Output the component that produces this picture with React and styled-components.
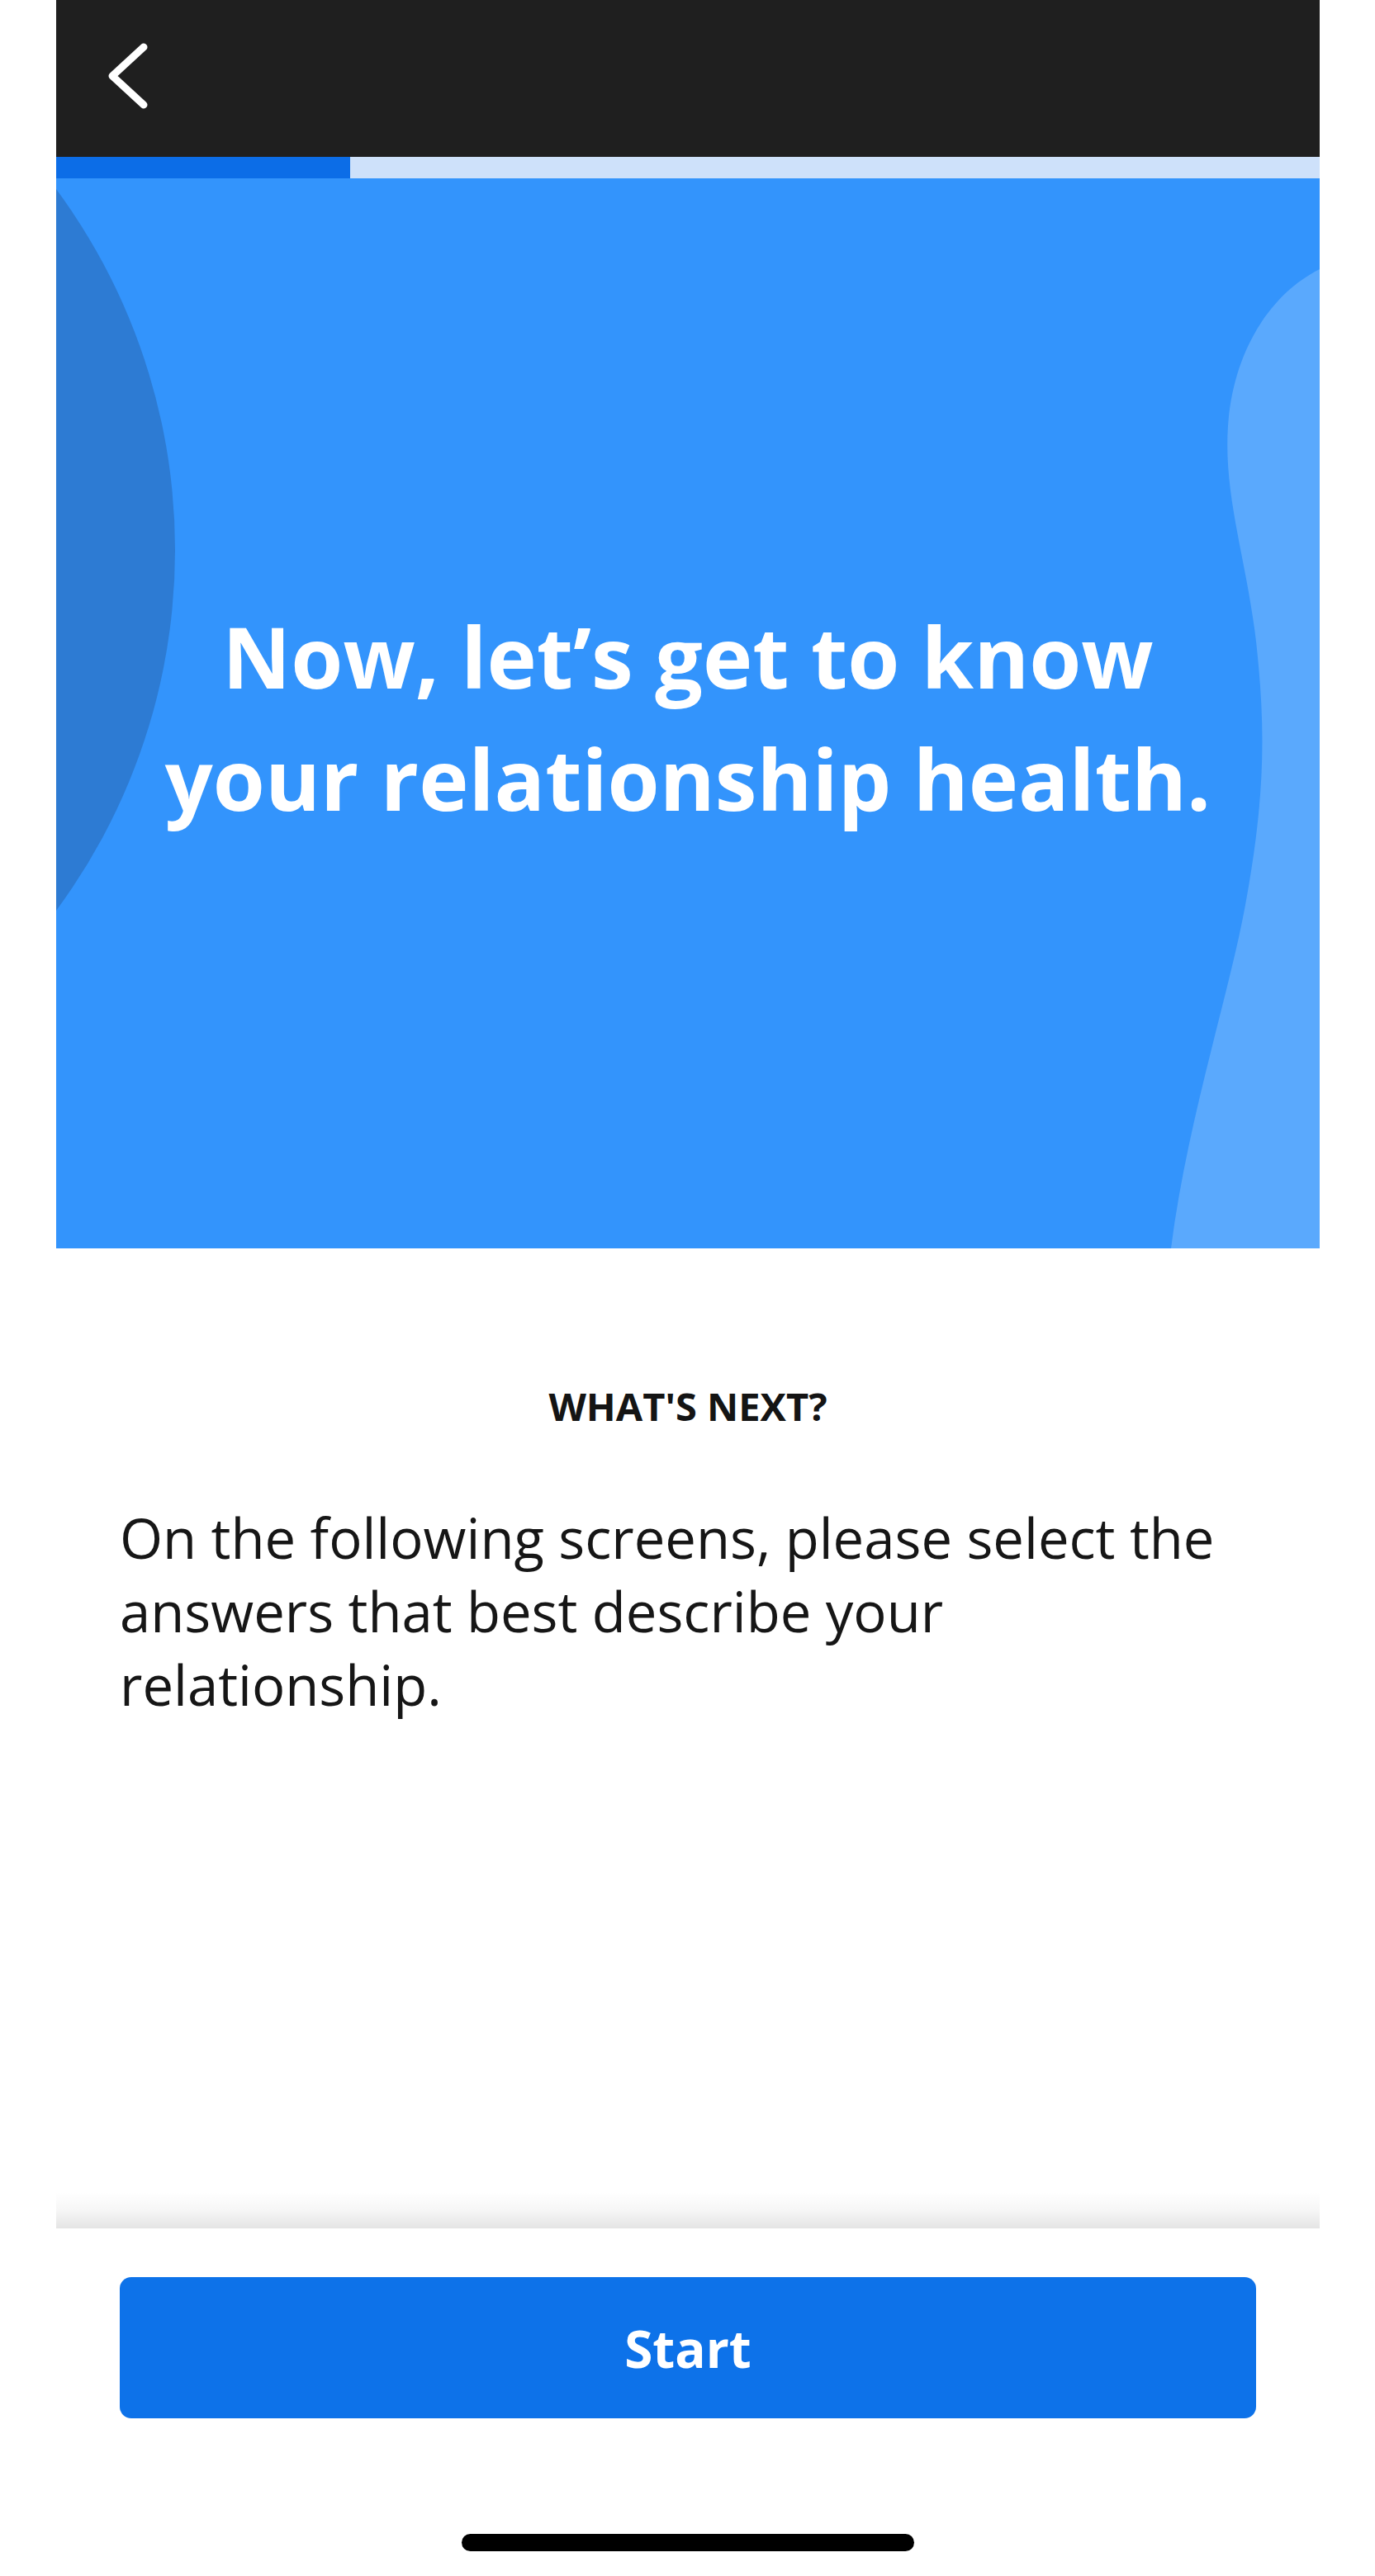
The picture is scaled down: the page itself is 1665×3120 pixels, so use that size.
import styled, { createGlobalStyle } from "styled-components";

// ▼ global
const GlobalStyle = createGlobalStyle`
    html, body {
        margin: 0;
        padding: 0;
        background: #ffffff;
    }
    * {
        box-sizing: border-box;
    }
`;

// ▼ layout
const Page = styled.div`
    width: 1665px;
    min-height: 3120px;
    padding: 0 67px 0 68px;
    display: flex;
    flex-direction: column;
    font-family: "Open Sans", "Noto Sans", sans-serif;
    background: #ffffff;
`;

const TopBar = styled.header`
    height: 190px;
    background: #1f1f1f;
    display: flex;
    align-items: center;
    padding: 0 0 6px 62px;
`;

const BackButton = styled.button`
    background: none;
    border: none;
    padding: 0;
    display: flex;
    cursor: pointer;
`;

const Track = styled.div`
    height: 26px;
    background: #cee1fa;
    display: flex;
`;

const Fill = styled.div`
    height: 100%;
    background: #0c6de7;
`;

const Hero = styled.section`
    position: relative;
    height: 1296px;
    background: #3394fc;
    overflow: hidden;
    display: flex;
    align-items: center;
    justify-content: center;
    padding-top: 10px;
`;

const HeroArt = styled.svg`
    position: absolute;
    inset: 0;
    width: 100%;
    height: 100%;
`;

const HeroTitle = styled.h1`
    position: relative;
    margin: 0;
    color: #ffffff;
    font-size: 102px;
    line-height: 148px;
    font-weight: 700;
    text-align: center;
`;

const Content = styled.main`
    flex: 1;
    padding: 160px 77px 0;
    display: flex;
    flex-direction: column;
    gap: 84px;
`;

const Eyebrow = styled.h2`
    margin: 0;
    font-size: 47px;
    line-height: 62px;
    font-weight: 700;
    color: #141414;
    text-align: center;
    text-transform: uppercase;
`;

const Body = styled.p`
    margin: 0;
    font-size: 67px;
    line-height: 89px;
    font-weight: 400;
    color: #161616;
`;

const Shade = styled.div`
    height: 44px;
    background: linear-gradient(
        to bottom,
        rgba(0, 0, 0, 0) 0%,
        rgba(0, 0, 0, 0.035) 50%,
        rgba(0, 0, 0, 0.105) 100%
    );
`;

const Footer = styled.footer`
    padding: 59px 77px 30px;
    display: flex;
    flex-direction: column;
    align-items: center;
`;

const PrimaryButton = styled.button`
    width: 100%;
    height: 171px;
    border: none;
    border-radius: 14px;
    background: #0d72e9;
    color: #ffffff;
    font-family: inherit;
    font-size: 62px;
    font-weight: 700;
    cursor: pointer;
`;

const HomeIndicator = styled.div`
    width: 548px;
    height: 21px;
    margin-top: 140px;
    border-radius: 11px;
    background: #000000;
`;

const progress = 356 / 1530;

const App = () => {
    return (
        <Page>
            <GlobalStyle />
            <TopBar>
                <BackButton aria-label="Back">
                    <svg width="50" height="84" viewBox="0 0 50 84" fill="none">
                        <path
                            d="M44 7 L6 42 L44 77"
                            stroke="#ffffff"
                            strokeWidth="9"
                            strokeLinecap="round"
                            strokeLinejoin="round"
                        />
                    </svg>
                </BackButton>
            </TopBar>

            <Track>
                <Fill style={{ width: `${progress * 100}%` }} />
            </Track>

            <Hero>
                {/* 背景の装飾（左の円と右の波） */}
                <HeroArt viewBox="0 0 1530 1296" preserveAspectRatio="none">
                    <circle cx="-591" cy="450" r="735" fill="#2d7bd3" />
                    <path
                        d="M1530 110
                           C1470 140 1425 210 1419 300
                           C1413 390 1445 470 1455 580
                           C1465 680 1462 760 1440 880
                           C1420 990 1370 1140 1350 1296
                           L1530 1296 Z"
                        fill="#5aa9fd"
                    />
                </HeroArt>
                <HeroTitle>
                    Now, let’s get to know
                    <br />
                    your relationship health.
                </HeroTitle>
            </Hero>

            <Content>
                <Eyebrow>What's next?</Eyebrow>
                <Body>
                    On the following screens, please select the answers that best describe your relationship.
                </Body>
            </Content>

            <Shade />
            <Footer>
                <PrimaryButton type="button">Start</PrimaryButton>
                <HomeIndicator />
            </Footer>
        </Page>
    );
};

export default App;
